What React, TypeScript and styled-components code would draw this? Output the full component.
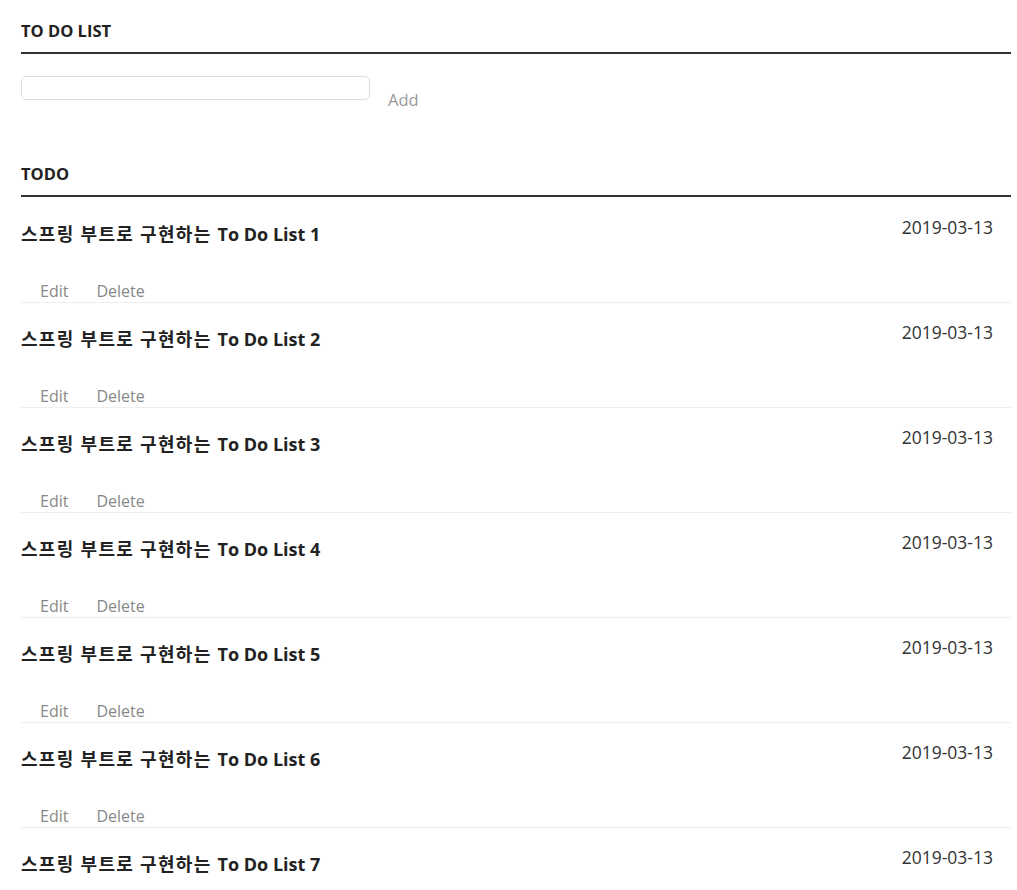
import React from "react";
import styled, { createGlobalStyle } from "styled-components";

const Global = createGlobalStyle`
  html, body { margin: 0; padding: 0; background: #fff; }
  body { font-family: "Open Sans", "Noto Sans CJK KR", sans-serif; color: #333; }
`;

const Page = styled.div`
  padding: 0 6px 0 21px;
`;

const SectionTitle = styled.h2`
  margin: 0;
  font-size: 16.5px;
  font-weight: 700;
  color: #222;
  line-height: 20px;
  padding-bottom: 11px;
  border-bottom: 2px solid #333;
`;

const Header = styled(SectionTitle)`
  padding-top: 21px;
`;

const TodoHeader = styled(SectionTitle)`
  padding-top: 54px;
`;

const Form = styled.div`
  display: flex;
  align-items: flex-start;
  gap: 18px;
  padding-top: 22px;
`;

const Input = styled.input`
  box-sizing: border-box;
  width: 349px;
  height: 24px;
  border: 1px solid #ddd;
  border-radius: 5px;
  outline: none;
`;

const AddButton = styled.button`
  background: none;
  border: none;
  padding: 0;
  margin-top: 14px;
  font-family: inherit;
  font-size: 16.5px;
  line-height: 20px;
  color: #999;
`;

const List = styled.ul`
  list-style: none;
  margin: 0;
  padding: 1px 0 0;
`;

const Item = styled.li`
  box-sizing: border-box;
  height: 105px;
  border-bottom: 1px solid #eee;
  display: flex;
  flex-direction: column;
`;

const Top = styled.div`
  display: flex;
  justify-content: space-between;
  padding-right: 18px;
`;

const Title = styled.div`
  font-size: 18px;
  font-weight: 700;
  color: #222;
  padding-top: 24px;
  line-height: 24px;
`;

const Hangul = styled.span`
  letter-spacing: 1.3px;
`;

const DateText = styled.div`
  font-size: 17.5px;
  color: #333;
  padding-top: 18px;
  line-height: 22px;
`;

const Actions = styled.div`
  display: flex;
  gap: 28px;
  padding-left: 19px;
  margin-top: auto;
  padding-bottom: 1px;
`;

const Action = styled.button`
  background: none;
  border: none;
  padding: 0;
  font-family: inherit;
  font-size: 16px;
  line-height: 20px;
  color: #888;
`;

const items = [1, 2, 3, 4, 5, 6, 7];

export default function App() {
  return (
    <>
      <Global />
      <Page>
        <Header>TO DO LIST</Header>
        <Form>
          <Input />
          <AddButton>Add</AddButton>
        </Form>
        <TodoHeader as="h3">TODO</TodoHeader>
        <List>
          {items.map((n) => (
            <Item key={n}>
              <Top>
                <Title>
                  <Hangul>스프링 부트로 구현하는 </Hangul>To Do List {n}
                </Title>
                <DateText>2019-03-13</DateText>
              </Top>
              <Actions>
                <Action>Edit</Action>
                <Action>Delete</Action>
              </Actions>
            </Item>
          ))}
        </List>
      </Page>
    </>
  );
}
